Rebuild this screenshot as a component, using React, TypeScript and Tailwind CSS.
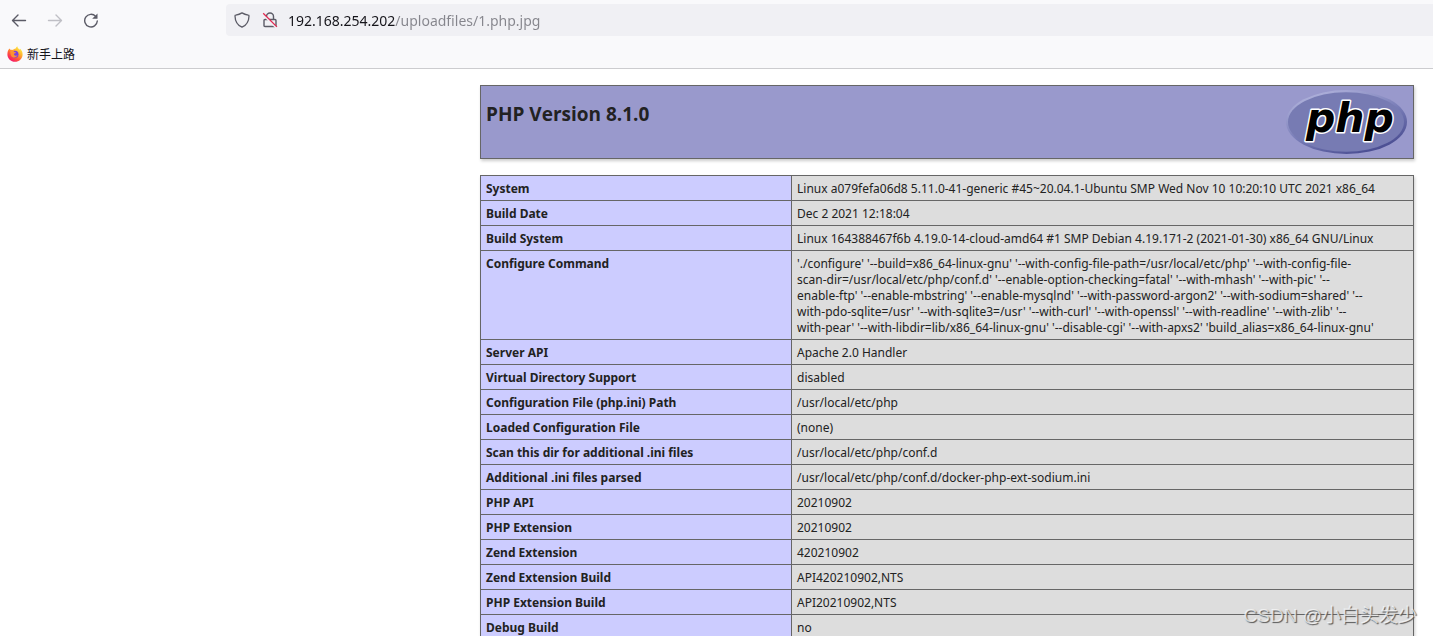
import type { ReactNode } from 'react'

const configureLines = [
  "'./configure' '--build=x86_64-linux-gnu' '--with-config-file-path=/usr/local/etc/php' '--with-config-file-",
  "scan-dir=/usr/local/etc/php/conf.d' '--enable-option-checking=fatal' '--with-mhash' '--with-pic' '--",
  "enable-ftp' '--enable-mbstring' '--enable-mysqlnd' '--with-password-argon2' '--with-sodium=shared' '--",
  "with-pdo-sqlite=/usr' '--with-sqlite3=/usr' '--with-curl' '--with-openssl' '--with-readline' '--with-zlib' '--",
  "with-pear' '--with-libdir=lib/x86_64-linux-gnu' '--disable-cgi' '--with-apxs2' 'build_alias=x86_64-linux-gnu'",
]

const rows: [string, ReactNode][] = [
  ['System', 'Linux a079fefa06d8 5.11.0-41-generic #45~20.04.1-Ubuntu SMP Wed Nov 10 10:20:10 UTC 2021 x86_64'],
  ['Build Date', 'Dec 2 2021 12:18:04'],
  ['Build System', 'Linux 164388467f6b 4.19.0-14-cloud-amd64 #1 SMP Debian 4.19.171-2 (2021-01-30) x86_64 GNU/Linux'],
  [
    'Configure Command',
    configureLines.map((line) => (
      <span key={line} className="block whitespace-nowrap">
        {line}
      </span>
    )),
  ],
  ['Server API', 'Apache 2.0 Handler'],
  ['Virtual Directory Support', 'disabled'],
  ['Configuration File (php.ini) Path', '/usr/local/etc/php'],
  ['Loaded Configuration File', '(none)'],
  ['Scan this dir for additional .ini files', '/usr/local/etc/php/conf.d'],
  ['Additional .ini files parsed', '/usr/local/etc/php/conf.d/docker-php-ext-sodium.ini'],
  ['PHP API', '20210902'],
  ['PHP Extension', '20210902'],
  ['Zend Extension', '420210902'],
  ['Zend Extension Build', 'API420210902,NTS'],
  ['PHP Extension Build', 'API20210902,NTS'],
  ['Debug Build', 'no'],
]

function FirefoxIcon() {
  return (
    <svg viewBox="0 0 16 16" className="size-4" aria-hidden="true">
      <defs>
        <linearGradient id="fx-flame" x1="0.85" y1="0.1" x2="0.25" y2="0.95">
          <stop offset="0" stopColor="#fff04a" />
          <stop offset="0.35" stopColor="#ffb02e" />
          <stop offset="0.65" stopColor="#ff5a36" />
          <stop offset="1" stopColor="#f5156c" />
        </linearGradient>
      </defs>
      <path
        d="M2.4 2.6c.4.7.9 1.1 1.5 1.4.6-.2 1.4-.2 2 0C6.5 3 7.6 2.5 8.6 2.4 9 1.6 9.5.9 10.3.2c.1 1.7 1.300 2.5 2.6 3.5.1-.4 0-.7-.1-1.1 1.9 1.5 2.900 3.700 2.800 6.1-.2 4-3.500 7.100-7.600 7.100S.4 12.600.4 8.500c0-2.400.7-4.400 2-5.900z"
        fill="url(#fx-flame)"
      />
      <circle cx="8" cy="8.3" r="3.5" fill="#7a3fe0" />
      <path
        d="M3.3 5.2c1.6-.8 3.3-.4 4.2.7.7.2 1.3.2 1.7.3-.2 1-1.9 1-2.3 1.7.1 1.800 2.300 2.400 3.700 1.200-.8 2.700-5 3.500-6.500.7-.7-1.500-.9-3-.8-4.600z"
        fill="#ff9131"
      />
    </svg>
  )
}

function NavIcons() {
  return (
    <nav className="flex w-[226px] shrink-0 items-center gap-5 pl-[11px]">
      <button type="button" aria-label="Back" className="size-4">
        <svg viewBox="0 0 16 16" fill="none" stroke="#5b5b66" strokeWidth="1.4" strokeLinecap="round" strokeLinejoin="round">
          <path d="M14.5 8.5H1.7M7 3 1.5 8.5 7 14" />
        </svg>
      </button>
      <button type="button" aria-label="Forward" disabled className="size-4">
        <svg viewBox="0 0 16 16" fill="none" stroke="#bfbfc5" strokeWidth="1.4" strokeLinecap="round" strokeLinejoin="round">
          <path d="M1.5 8.5h12.8M9 3l5.5 5.5L9 14" />
        </svg>
      </button>
      <button type="button" aria-label="Reload" className="size-4">
        <svg viewBox="0 0 16 16" fill="none" stroke="#5b5b66" strokeWidth="1.4" strokeLinecap="round">
          <path d="M12.7 4.4A6.3 6.3 0 1 0 14.3 9" />
          <path d="M14.5 1.5v5.3H9.2z" fill="#5b5b66" stroke="none" />
        </svg>
      </button>
    </nav>
  )
}

function AddressBar() {
  return (
    <div className="flex h-8 flex-1 items-center rounded-l bg-[#f0f0f4] pl-2">
      <svg
        viewBox="0 0 16 16"
        className="size-4 shrink-0"
        fill="none"
        stroke="#5b5b66"
        strokeWidth="1.3"
        strokeLinejoin="round"
        aria-hidden="true"
      >
        <path d="M8 .9c2 1.3 4 1.9 6.3 2.2.5 0 .7.4.7.8-.1 5.1-2.3 9.1-7 11.3C3.3 13 1.1 9 1 3.9c0-.4.2-.8.7-.8C4 2.8 6 2.2 8 .9z" />
      </svg>
      <svg viewBox="0 0 16 16" className="ml-3 size-4 shrink-0" fill="none" strokeLinejoin="round" aria-hidden="true">
        <path
          d="M4.5 7V4.500a3.500 3.500 0 0 1 7 0V7M3 7.500h10c.6 0 1 .4 1 1v5c0 .6-.4 1-1 1H3c-.6 0-1-.4-1-1v-5c0-.6.4-1 1-1z"
          stroke="#5b5b66"
          strokeWidth="1.4"
        />
        <path d="M.8 2.2 14.3 15.7" stroke="#f0f0f4" strokeWidth="2" />
        <path d="M1.2 1.2 14.9 14.9" stroke="#e22850" strokeWidth="1.3" />
      </svg>
      {/* host part is dark, the path after it is dimmed */}
      <input
        type="text"
        aria-label="Address"
        defaultValue="192.168.254.202/uploadfiles/1.php.jpg"
        spellCheck={false}
        className="ml-2.5 h-8 min-w-0 flex-1 bg-[linear-gradient(90deg,#15141a_107px,#85858c_107px)] bg-clip-text font-['Noto_Sans',sans-serif] text-sm text-transparent outline-none"
      />
    </div>
  )
}

function PhpLogo() {
  return (
    <svg viewBox="0 0 122 66" className="h-[66px] w-[122px]" role="img" aria-label="PHP logo">
      <defs>
        <linearGradient id="php-rim" x1="0.2" y1="0" x2="0.8" y2="1">
          <stop offset="0" stopColor="#b4b6de" />
          <stop offset="0.5" stopColor="#7a7eb8" />
          <stop offset="1" stopColor="#43468c" />
        </linearGradient>
      </defs>
      <ellipse cx="60.5" cy="32" rx="60.500" ry="32" fill="url(#php-rim)" />
      <ellipse cx="60" cy="32" rx="58" ry="29.800" fill="#777bb3" />
      <text
        x="20"
        y="42"
        className="font-['DejaVu_Sans',sans-serif] text-[41px] font-bold italic"
        fill="#000"
        stroke="#fff"
        strokeWidth="3"
        strokeLinejoin="round"
        paintOrder="stroke"
      >
        php
      </text>
    </svg>
  )
}

export default function App() {
  return (
    <div className="relative h-screen overflow-hidden bg-white font-['Open_Sans','Noto_Sans_CJK_SC',sans-serif] text-[#222]">
      <header className="border-b border-[#cccccf] bg-[#f9f9fb]">
        <div className="flex h-10 items-center">
          <NavIcons />
          <AddressBar />
        </div>
        <div className="flex h-7 items-center pl-[7px]">
          <a href="#start" className="flex items-center gap-1 text-xs text-[#15141a]">
            <FirefoxIcon />
            <span className="pt-0.5">新手上路</span>
          </a>
        </div>
      </header>

      <main className="mr-[19px] ml-auto flex w-[934px] flex-col gap-4 pt-4">
        <section className="flex h-[74px] items-start justify-between border border-[#666] bg-[#9999cc] px-[5px] pt-1 shadow-[1px_2px_3px_#ccc]">
          <h1 className="pt-3 text-[19px] leading-6 font-bold">PHP Version 8.1.0</h1>
          <a href="#php">
            <PhpLogo />
          </a>
        </section>

        <table className="w-full table-fixed border-collapse font-['Noto_Sans',sans-serif] text-xs leading-4 shadow-[1px_2px_3px_#ccc]">
          <colgroup>
            <col className="w-[311px]" />
            <col />
          </colgroup>
          <tbody>
            {rows.map(([name, value]) => (
              <tr key={name}>
                <th scope="row" className="border border-[#666] bg-[#ccccff] px-[5px] pt-[5px] pb-[3px] text-left align-top font-bold">
                  {name}
                </th>
                <td className="border border-[#666] bg-[#ddd] px-[5px] pt-[5px] pb-[3px] align-top">{value}</td>
              </tr>
            ))}
          </tbody>
        </table>
      </main>

      <p className="absolute right-4 bottom-2 font-['Liberation_Sans','Noto_Sans_CJK_SC',sans-serif] text-[19px] leading-6 text-white/70 [text-shadow:1px_1px_1px_#555]">
        CSDN @小白头发少
      </p>
    </div>
  )
}
